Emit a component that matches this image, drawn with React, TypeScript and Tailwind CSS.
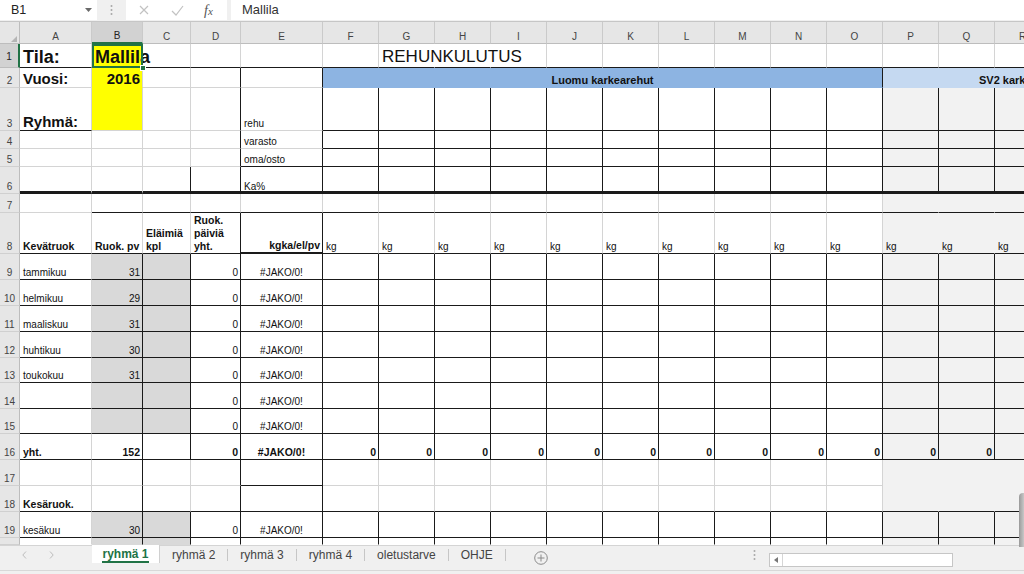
import React from "react";

type Spec = {
  t?: React.ReactNode;
  r?: "g" | "k" | "n";
  b?: "g" | "k" | "n" | "k2" | "k3";
  bg?: "w" | "y" | "d" | "l" | "b1" | "b2";
  c?: string;
  span?: string;
  sel?: boolean;
};

const RB: Record<string, string> = {
  g: "border-r border-r-[#d4d4d4]",
  k: "border-r border-r-[#1a1a1a]",
  n: "border-r border-r-transparent",
};
const BB: Record<string, string> = {
  g: "border-b border-b-[#d4d4d4]",
  k: "border-b border-b-[#1a1a1a]",
  n: "border-b border-b-transparent",
  k2: "border-b-2 border-b-[#1a1a1a]",
  k3: "border-b-[3px] border-b-[#1a1a1a]",
};
const BG: Record<string, string> = {
  w: "",
  y: "bg-[#ffff00]",
  d: "bg-[#d9d9d9]",
  l: "bg-[#f2f2f2]",
  b1: "bg-[#8db4e2]",
  b2: "bg-[#c5d9f1]",
};

const N = "text-[10px] leading-[12px] pl-[3px]";
const NR = "text-[10px] leading-[12px] justify-end pr-[2px]";
const NC = "text-[10px] leading-[12px] justify-center";
const BL = "text-[10.5px] leading-[13px] font-bold pl-[3px]";
const BR = "text-[10.5px] leading-[13px] font-bold justify-end pr-[2px]";
const BC = "text-[10.5px] leading-[13px] font-bold justify-center";

const rep = (n: number, s: Spec): Spec[] => Array.from({ length: n }, () => ({ ...s }));

const dataRow = (m: string, d: string, last = false): Spec[] => {
  const b = last ? "n" : "k";
  return [
    { t: m, c: N, b },
    { t: d, c: NR, bg: "d", r: "k", b },
    { bg: "d", r: "k", b },
    { t: last ? undefined : "0", c: NR, r: "k", b },
    { t: last ? undefined : "#JAKO/0!", c: NC, r: "k", b },
    ...rep(10, { r: "k", b }),
    ...rep(3, { bg: "l", r: "k", b }),
  ];
};

const ROWS: Spec[][] = [
  [
    { t: "Tila:", c: "text-[18px] leading-[20px] font-bold pl-[3px]", b: "k" },
    { t: "Mallila", c: "text-[18px] leading-[20px] font-bold pl-[3px]", bg: "y", b: "k", sel: true },
    { b: "k" },
    { b: "k" },
    { b: "k" },
    { b: "k" },
    { t: "REHUNKULUTUS", c: "text-[17px] leading-[20px] pl-[3px]", r: "n", b: "k" },
    { r: "n", b: "k" },
    ...rep(10, { b: "k" }),
  ],
  [
    { t: "Vuosi:", c: "text-[15px] leading-[17px] font-bold pl-[3px]" },
    { t: "2016", c: "text-[15px] leading-[17px] font-bold justify-end pr-[2px]", bg: "y", b: "n" },
    {},
    { r: "k" },
    { r: "k" },
    { t: "Luomu karkearehut", span: "col-span-10", c: "text-[11px] leading-[13px] font-bold justify-center", bg: "b1", r: "k", b: "n" },
    { t: "SV2 karkearehut", span: "col-span-3", c: "text-[11px] leading-[13px] font-bold pl-[96px]", bg: "b2", r: "n", b: "n" },
  ],
  [
    { t: "Ryhmä:", c: "text-[15px] leading-[17px] font-bold pl-[3px]", b: "k" },
    { bg: "y" },
    {},
    { r: "k" },
    { t: "rehu", c: N, r: "k" },
    ...rep(10, { r: "k", b: "k" }),
    ...rep(3, { bg: "l", r: "k", b: "k" }),
  ],
  [
    {},
    {},
    {},
    { r: "k" },
    { t: "varasto", c: N, r: "k" },
    ...rep(10, { r: "k", b: "k" }),
    ...rep(3, { bg: "l", r: "k", b: "k" }),
  ],
  [
    {},
    {},
    {},
    { r: "k" },
    { t: "oma/osto", c: N, r: "k", b: "k" },
    ...rep(10, { r: "k", b: "k" }),
    ...rep(3, { bg: "l", r: "k", b: "k" }),
  ],
  [
    { b: "k3" },
    { b: "k3" },
    { r: "k", b: "k3" },
    { r: "k", b: "k3" },
    { t: <span className="translate-y-[2px]">Ka%</span>, c: N, r: "k", b: "k3" },
    ...rep(10, { r: "k", b: "k3" }),
    ...rep(3, { bg: "l", r: "k", b: "k3" }),
  ],
  [
    {},
    { b: "k" },
    { b: "k" },
    { b: "k" },
    { b: "k" },
    ...rep(10, { b: "k" }),
    ...rep(3, { bg: "l", r: "n", b: "k" }),
  ],
  [
    { t: "Kevätruok", c: BL, b: "k" },
    { t: "Ruok. pv", c: BL, b: "k" },
    { t: <span>Eläimiä<br />kpl</span>, c: BL, b: "k" },
    { t: <span>Ruok.<br />päiviä<br />yht.</span>, c: BL, r: "k", b: "k" },
    { t: "kgka/el/pv", c: BR, r: "k", b: "k2" },
    ...rep(10, { t: "kg", c: N, b: "k" }),
    ...rep(3, { t: "kg", c: N, bg: "l", r: "n", b: "k" }),
  ],
  dataRow("tammikuu", "31"),
  dataRow("helmikuu", "29"),
  dataRow("maaliskuu", "31"),
  dataRow("huhtikuu", "30"),
  dataRow("toukokuu", "31"),
  dataRow("", ""),
  dataRow("", ""),
  [
    { t: "yht.", c: BL, b: "k" },
    { t: "152", c: BR, r: "k", b: "k" },
    { r: "k", b: "k" },
    { t: "0", c: BR, r: "k", b: "k" },
    { t: "#JAKO/0!", c: BC, r: "k", b: "k" },
    ...rep(10, { t: "0", c: BR, r: "k", b: "k" }),
    ...rep(3, { t: "0", c: BR, bg: "l", r: "k", b: "k" }),
  ],
  [
    {},
    { r: "k" },
    {},
    { r: "k" },
    { r: "k", b: "k" },
    ...rep(10, {}),
    ...rep(3, { bg: "l", r: "n", b: "n" }),
  ],
  [
    { t: "Kesäruok.", c: BL, b: "k" },
    { r: "k", b: "k" },
    { b: "k" },
    { r: "k", b: "k" },
    { r: "k", b: "k" },
    ...rep(10, { b: "k" }),
    ...rep(3, { bg: "l", r: "n", b: "k" }),
  ],
  dataRow("kesäkuu", "30"),
  dataRow("", "", true),
];

const COLS = "ABCDEFGHIJKLMNOPQR".split("");

const COLH =
  "flex items-end justify-center text-[10px] leading-[12px] text-[#444] bg-[#e6e6e6] border-r border-r-[#cacaca] border-b border-b-[#bdbdbd]";
const COLSEL =
  "flex items-end justify-center text-[10px] leading-[12px] text-[#222] bg-[#d2d2d2] border-r border-r-[#cacaca] border-b-2 border-b-[#217346]";
const RH =
  "flex items-end justify-center text-[10px] leading-[12px] text-[#444] bg-[#e6e6e6] border-r border-r-[#bdbdbd] border-b border-b-[#d0d0d0]";
const RHSEL =
  "flex items-end justify-center pb-[4px] text-[10px] leading-[12px] text-[#222] bg-[#d2d2d2] border-r-2 border-r-[#217346] border-b border-b-[#bdbdbd]";

function Cell({ s }: { s: Spec }) {
  const cls = [
    "flex items-end whitespace-nowrap text-[#111]",
    RB[s.r ?? "g"],
    BB[s.b ?? "g"],
    BG[s.bg ?? "w"],
    s.c ?? "",
    s.span ?? "",
    s.sel ? "relative" : "",
  ].join(" ");
  return (
    <div className={cls}>
      {s.t}
      {s.sel && (
        <>
          <div className="pointer-events-none absolute left-0 top-0 -right-px -bottom-px border-2 border-[#217346]" />
          <div className="absolute -right-[4px] -bottom-[4px] h-[6px] w-[6px] border border-white bg-[#217346]" />
        </>
      )}
    </div>
  );
}

function FormulaBar() {
  return (
    <div className="flex h-[22px] items-start border-b border-b-[#c6c6c6] bg-[#f0f0f0] text-[#222]">
      <div className="relative flex h-[20px] w-[97px] items-center bg-white pl-[11px] text-[12.5px]">
        B1
        <svg className="absolute left-[85px] top-[8px]" width="7" height="4" viewBox="0 0 7 4">
          <polygon points="0,0 7,0 3.5,4" fill="#6a6a6a" />
        </svg>
      </div>
      <div className="flex h-[20px] w-[29px] items-center justify-center">
        <svg width="3" height="12" viewBox="0 0 3 12">
          <circle cx="1.5" cy="2" r="1" fill="#a8a8a8" />
          <circle cx="1.5" cy="6" r="1" fill="#a8a8a8" />
          <circle cx="1.5" cy="10" r="1" fill="#a8a8a8" />
        </svg>
      </div>
      <div className="flex h-[20px] w-[101px] items-center bg-white">
        <svg className="ml-[13px]" width="10" height="10" viewBox="0 0 10 10">
          <path d="M1 1L9 9M9 1L1 9" stroke="#c2c2c2" strokeWidth="1.2" />
        </svg>
        <svg className="ml-[22px]" width="13" height="11" viewBox="0 0 13 11">
          <path d="M1 6l4 4L12 1" stroke="#c2c2c2" strokeWidth="1.2" fill="none" />
        </svg>
        <span className="ml-[20px] font-['Liberation_Serif',serif] text-[14px] italic text-[#555]">
          f<span className="text-[11px]">x</span>
        </span>
      </div>
      <div className="w-[4px]" />
      <div className="flex h-[20px] flex-1 items-center bg-white pl-[11px] text-[13px] text-[#333]">Mallila</div>
    </div>
  );
}

function Tab({ label }: { label: string }) {
  return (
    <div className="flex h-[18px] items-end px-[12px]">
      <span className="pb-[2px] leading-[14px] text-[#444]">{label}</span>
    </div>
  );
}

function Sep() {
  return <div className="mt-[3px] h-[12px] w-px bg-[#c6c6c6]" />;
}

function TabBar() {
  return (
    <div className="flex h-[25px] items-start border-t border-t-[#d4d4d4] bg-[#f0f0f0] text-[12px]">
      <div className="flex flex-1 items-start">
        <div className="flex h-[18px] w-[92px] shrink-0 items-center">
          <svg className="ml-[22px]" width="5" height="8" viewBox="0 0 5 8">
            <path d="M4 0.5L0.8 4L4 7.5" stroke="#bcbcbc" fill="none" />
          </svg>
          <svg className="ml-[22px]" width="5" height="8" viewBox="0 0 5 8">
            <path d="M1 0.5L4.2 4L1 7.5" stroke="#bcbcbc" fill="none" />
          </svg>
        </div>
        <div className="-mt-px flex h-[18px] w-[68px] shrink-0 items-end justify-center border-r border-r-[#d0d0d0] bg-white">
          <span className="border-b-2 border-b-[#217346] leading-[14px] font-bold text-[#217346]">ryhmä 1</span>
        </div>
        <Tab label="ryhmä 2" />
        <Sep />
        <Tab label="ryhmä 3" />
        <Sep />
        <Tab label="ryhmä 4" />
        <Sep />
        <Tab label="oletustarve" />
        <Sep />
        <Tab label="OHJE" />
        <Sep />
        <svg className="ml-[28px] mt-[5px]" width="14" height="14" viewBox="0 0 14 14">
          <circle cx="7" cy="7" r="6.3" stroke="#8a8a8a" fill="none" strokeWidth="1" />
          <path d="M7 3.5v7M3.5 7h7" stroke="#8a8a8a" strokeWidth="1" />
        </svg>
      </div>
      <div className="flex w-[278px] shrink-0 items-start">
        <div className="flex h-[18px] w-[16px] items-center justify-center">
          <svg width="3" height="12" viewBox="0 0 3 12">
            <circle cx="1.5" cy="2" r="1" fill="#a8a8a8" />
            <circle cx="1.5" cy="6" r="1" fill="#a8a8a8" />
            <circle cx="1.5" cy="10" r="1" fill="#a8a8a8" />
          </svg>
        </div>
        <div className="ml-[7px] mt-[7px] flex h-[14px] w-[184px] border border-[#c6c6c6] bg-white">
          <div className="flex h-full w-[13px] items-center justify-center border-r border-r-[#d6d6d6]">
            <svg width="4" height="6" viewBox="0 0 4 6">
              <polygon points="4,0 4,6 0,3" fill="#777" />
            </svg>
          </div>
        </div>
      </div>
    </div>
  );
}

export default function App() {
  return (
    <div className="relative h-[574px] w-[1024px] overflow-hidden bg-white font-['Liberation_Sans',Arial,sans-serif]">
      <FormulaBar />
      <div className="w-[1024px] overflow-hidden">
        <div className="grid w-[1051px] grid-cols-[20px_72px_51px_48px_50px_82px_repeat(13,56px)] grid-rows-[22px_24px_20px_43px_18px_18px_27px_19px_41px_26px_26px_26px_26px_25px_26px_25px_26px_26px_26px_26px_7px]">
          <div className="relative border-b border-r border-b-[#bdbdbd] border-r-[#bdbdbd] bg-[#e6e6e6]">
            <svg className="absolute left-[11px] top-[14px]" width="6" height="6" viewBox="0 0 6 6">
              <polygon points="6,0 6,6 0,6" fill="#b5b5b5" />
            </svg>
          </div>
          {COLS.map((c) => (
            <div key={c} className={c === "B" ? COLSEL : COLH}>
              {c}
            </div>
          ))}
          {ROWS.map((row, i) => (
            <React.Fragment key={i}>
              <div className={i === 0 ? RHSEL : RH}>{i < 19 ? i + 1 : ""}</div>
              {row.map((s, j) => (
                <Cell key={j} s={s} />
              ))}
            </React.Fragment>
          ))}
        </div>
      </div>
      <TabBar />
      <div className="h-[4px] border-t border-t-[#d8d8d8] bg-[#f0f0f0]" />
      <div className="absolute right-0 top-[493px] h-[54px] w-[5px] rounded-tl-[4px] bg-linear-to-r from-[#9a9a9a] to-[#c8c8c8]" />
    </div>
  );
}
